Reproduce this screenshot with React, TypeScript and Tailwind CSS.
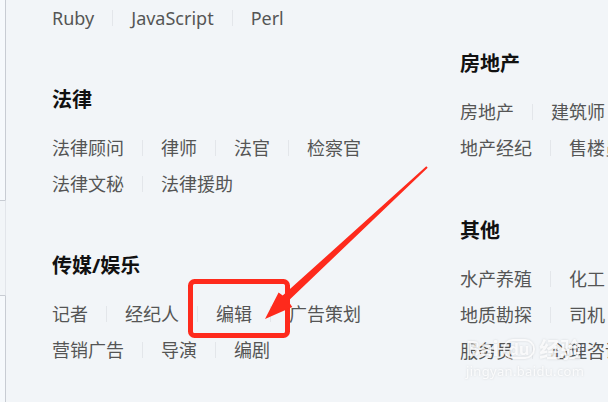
import React from 'react';

interface Section {
  title?: string;
  rows: string[][];
}

const leftSections: Section[] = [
  { rows: [['Ruby', 'JavaScript', 'Perl']] },
  {
    title: '法律',
    rows: [
      ['法律顾问', '律师', '法官', '检察官'],
      ['法律文秘', '法律援助'],
    ],
  },
  {
    title: '传媒/娱乐',
    rows: [
      ['记者', '经纪人', '编辑', '广告策划'],
      ['营销广告', '导演', '编剧'],
    ],
  },
];

const rightSections: Section[] = [
  {
    title: '房地产',
    rows: [
      ['房地产', '建筑师', '景观设计'],
      ['地产经纪', '售楼员'],
    ],
  },
  {
    title: '其他',
    rows: [
      ['水产养殖', '化工', '园艺'],
      ['地质勘探', '司机'],
      ['服务员', '心理咨询'],
    ],
  },
];

function Row({ items }: { items: string[] }) {
  return (
    <div className="flex items-center h-9 whitespace-nowrap text-[18px] text-[#555]">
      {items.map((item, i) => (
        <React.Fragment key={item}>
          {i > 0 && <span className="mx-[18px] w-px h-4 bg-[#e3e6ea] shrink-0" />}
          <span>{item}</span>
        </React.Fragment>
      ))}
    </div>
  );
}

function Block({ section }: { section: Section }) {
  return (
    <div>
      {section.title && (
        <h3 className="h-7 leading-7 mb-4 text-[20px] font-bold text-[#111]">{section.title}</h3>
      )}
      {section.rows.map((row, i) => (
        <Row key={i} items={row} />
      ))}
    </div>
  );
}

export default function App() {
  return (
    <div
      className="relative flex w-[608px] h-[402px] overflow-hidden bg-[#f2f5f8]"
      style={{ fontFamily: '"Noto Sans", "Noto Sans CJK SC", sans-serif' }}
    >
      {/* left edge strip */}
      <div className="flex flex-col w-[6px] shrink-0 bg-[#f6f9fc]">
        <div className="h-[200px] border-r border-[#c8ccd3]" />
        <div className="h-[96px] border-y border-r border-y-[#c8ccd3] border-r-[#e2e5ea] bg-[#f2f5f8]" />
        <div className="flex-1 border-r border-[#c8ccd3]" />
      </div>

      <div className="flex flex-1 pl-[46px]">
        <div className="w-[408px] shrink-0 flex flex-col gap-[50px]">
          {leftSections.map((s, i) => (
            <Block key={i} section={s} />
          ))}
        </div>
        <div className="flex-1 flex flex-col gap-[51px] pt-[50px] overflow-hidden">
          {rightSections.map((s, i) => (
            <Block key={i} section={s} />
          ))}
        </div>
      </div>

      {/* watermark */}
      <div className="absolute left-[466px] top-[338px] flex flex-col items-start text-white/80 drop-shadow-[0_0_1px_rgba(0,0,0,0.15)] pointer-events-none">
        <div className="flex items-end gap-1 text-[21px] font-bold leading-none">
          <span>Bai</span>
          <span className="px-1 rounded-full border-2 border-white/80 text-[16px]">du</span>
          <span style={{ fontFamily: '"Noto Sans CJK SC", sans-serif' }}>经验</span>
        </div>
        <div className="mt-[6px] text-[13px] leading-none tracking-wide">jingyan.baidu.com</div>
      </div>

      {/* red annotation */}
      <svg className="absolute inset-0 pointer-events-none" width="608" height="402" viewBox="0 0 608 402">
        <rect x="190.5" y="281.5" width="97" height="54" rx="4" fill="none" stroke="#fe2a1c" strokeWidth="5" />
        <polygon
          points="427.7,167.7 426.3,166.3 282.7,295.6 278.6,292.5 265,319 292.3,307.1 288.2,301"
          fill="#fe2a1c"
        />
      </svg>
    </div>
  );
}
